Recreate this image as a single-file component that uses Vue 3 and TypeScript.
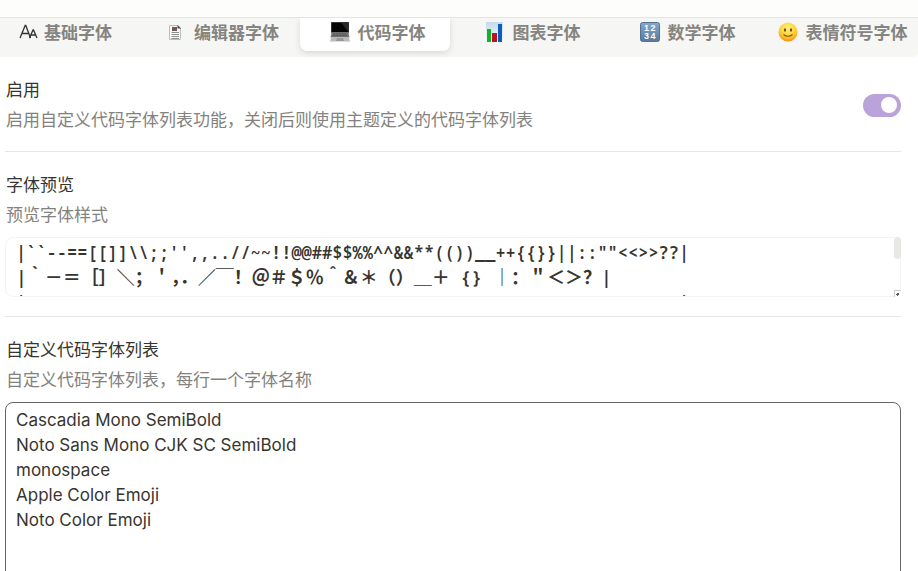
<script setup lang="ts">
import { ref } from 'vue'

interface Tab {
  id: string
  label: string
}

const tabs: Tab[] = [
  { id: 'base', label: '基础字体' },
  { id: 'editor', label: '编辑器字体' },
  { id: 'code', label: '代码字体' },
  { id: 'chart', label: '图表字体' },
  { id: 'math', label: '数学字体' },
  { id: 'emoji', label: '表情符号字体' },
]

const active = ref('code')
const enabled = ref(true)

const halfWidth = '|``--==[[]]\\\\;;\'\',,..//~~!!@@##$$%%^^&&**(())__++{{}}||::""<<>>??|'
const fullWidth = '|｀－＝［］＼；＇，．／￣！＠＃＄％＾＆＊（）＿＋｛｝｜：＂＜＞？|'
const blank = '|' + ' '.repeat(64) + '|'

const fonts = ref(
  [
    'Cascadia Mono SemiBold',
    'Noto Sans Mono CJK SC SemiBold',
    'monospace',
    'Apple Color Emoji',
    'Noto Color Emoji',
  ].join('\n'),
)
</script>

<template>
  <div class="page">
    <header class="topbar"></header>
    <nav class="tabs" role="tablist">
      <button
        v-for="tab in tabs"
        :key="tab.id"
        class="tab"
        :class="{ active: tab.id === active }"
        type="button"
        role="tab"
        :aria-selected="tab.id === active"
        @click="active = tab.id"
      >
        <svg v-if="tab.id === 'base'" class="icon" viewBox="0 0 20 20" aria-hidden="true">
          <g fill="none" stroke="#333" stroke-width="1.3">
            <path d="M2 16 L7.200 3.500 H7.800 L12.500 16 M3.800 11.500 H10.800" />
            <path d="M11.500 16 L15 8 H15.500 L19 16 M13 13 H17.500" />
          </g>
        </svg>
        <svg v-else-if="tab.id === 'editor'" class="icon" viewBox="0 0 20 20" aria-hidden="true">
          <path d="M3.500 3.500 H12 L14.500 6 V17.500 H3.500 Z" fill="#fafafa" stroke="#b8bcbc" />
          <path d="M11.500 3 V6.500 H15 Z" fill="#45494a" />
          <rect x="6" y="5" width="5" height="4" fill="#4d6b59" />
          <path d="M6 5 L11 9 M11 5 L6 9" stroke="#9a4548" />
          <path d="M5.500 10.500 H13 M5.500 12.500 H13 M5.500 14.500 H13 M5.500 16.500 H13" stroke="#8c9090" />
        </svg>
        <svg v-else-if="tab.id === 'code'" class="icon" viewBox="0 0 20 20" aria-hidden="true">
          <rect x="1" y="0" width="18" height="11" fill="#686868" />
          <rect x="1.500" y="0.500" width="17" height="9.500" fill="#050505" />
          <path d="M11 0.500 H18.500 V10 Z" fill="#25282a" />
          <path d="M1.500 10.500 H18.500 L19.500 15.500 H0.500 Z" fill="#777" />
          <path d="M3 12 H17 M2.500 13.700 H17.500" stroke="#4a4a4a" stroke-dasharray="1 0.500" />
          <path d="M1 15.500 H19 L20 20 H0 Z" fill="#b9b9b9" />
          <path d="M7 16 H13 L14 19 H6 Z" fill="#999" />
          <path d="M0 19.500 H20" stroke="#ddd" />
        </svg>
        <svg v-else-if="tab.id === 'chart'" class="icon" viewBox="0 0 20 20" aria-hidden="true">
          <defs>
            <linearGradient id="chart-sky" x1="0" y1="0" x2="0" y2="1">
              <stop offset="0" stop-color="#c6d9ec" />
              <stop offset="1" stop-color="#f8fbfd" />
            </linearGradient>
          </defs>
          <rect x="1" y="0" width="17" height="20" fill="url(#chart-sky)" />
          <rect x="2" y="7" width="4" height="13" fill="#0db529" />
          <rect x="7" y="11" width="5" height="9" fill="#bd1220" />
          <rect x="13" y="2" width="4" height="18" fill="#075dc0" />
        </svg>
        <svg v-else-if="tab.id === 'math'" class="icon" viewBox="0 0 20 20" aria-hidden="true">
          <defs>
            <linearGradient id="math-blue" x1="0" y1="0" x2="0" y2="1">
              <stop offset="0" stop-color="#84a9cc" />
              <stop offset="1" stop-color="#59789b" />
            </linearGradient>
          </defs>
          <rect x="0.500" y="0.500" width="19" height="19" rx="2" fill="url(#math-blue)" stroke="#557391" />
          <g fill="#fff" font-family="Liberation Sans, sans-serif" font-size="9" text-anchor="middle">
            <text x="6.500" y="9">1</text>
            <text x="13" y="9">2</text>
            <text x="6.500" y="17">3</text>
            <text x="13" y="17">4</text>
          </g>
        </svg>
        <svg v-else class="icon" viewBox="0 0 20 20" aria-hidden="true">
          <defs>
            <radialGradient id="face" cx="0.500" cy="0.300" r="0.700">
              <stop offset="0" stop-color="#fff17b" />
              <stop offset="0.600" stop-color="#ffd137" />
              <stop offset="1" stop-color="#f39214" />
            </radialGradient>
          </defs>
          <circle cx="10" cy="10" r="9.500" fill="url(#face)" />
          <ellipse cx="7" cy="8" rx="1.100" ry="1.700" fill="#75471b" />
          <ellipse cx="13" cy="8" rx="1.100" ry="1.700" fill="#75471b" />
          <path d="M5.500 12.500 Q10 16 14.500 12.500" fill="none" stroke="#80501b" stroke-width="1.100" />
        </svg>
        <span>{{ tab.label }}</span>
      </button>
    </nav>

    <main class="settings">
      <section class="item row">
        <label for="enable">
          <span class="title">启用</span>
          <span class="desc">启用自定义代码字体列表功能，关闭后则使用主题定义的代码字体列表</span>
        </label>
        <input id="enable" v-model="enabled" class="switch" type="checkbox" role="switch" />
      </section>

      <section class="item preview-item">
        <span id="preview-title" class="title">字体预览</span>
        <span class="desc">预览字体样式</span>
        <div class="preview-frame">
          <div class="preview" role="region" aria-labelledby="preview-title" tabindex="0">
            <div>{{ halfWidth }}</div>
            <div class="wide">{{ fullWidth }}</div>
            <div>{{ blank }}</div>
          </div>
          <span class="thumb" aria-hidden="true"></span>
          <svg class="grip" viewBox="0 0 7 7" aria-hidden="true">
            <rect width="7" height="7" fill="#fff" />
            <path d="M0 0.500 H7 M0.500 0 V7" stroke="#cfcfd2" />
            <path d="M3 3 H5 V5 H4 V6 H3 V5 H2 V4 H3 Z" fill="#55555a" />
          </svg>
        </div>
      </section>

      <section class="item">
        <label for="fonts">
          <span class="title">自定义代码字体列表</span>
          <span class="desc">自定义代码字体列表，每行一个字体名称</span>
        </label>
        <textarea id="fonts" v-model="fonts" class="list" rows="10" spellcheck="false"></textarea>
      </section>
    </main>
  </div>
</template>

<style>
body {
  background: #fff;
}
</style>

<style scoped>
.page {
  height: 100vh;
  overflow: hidden;
  color: #37352f;
  font-family: 'Inter', 'Noto Sans CJK SC', sans-serif;
  font-size: 17px;
}

.topbar {
  height: 17px;
  background: #fdfdfb;
  border-bottom: 1px solid #e4e4e3;
}

.tabs {
  display: grid;
  grid-template-columns: 140px repeat(5, minmax(0, 1fr));
  gap: 5px;
  padding: 0 3px 6px 0;
  background: #f6f6f4;
  border-radius: 0 0 5px 0;
}

.tab {
  display: flex;
  align-items: center;
  justify-content: center;
  gap: 8px;
  height: 33px;
  padding: 0 0 6px 5px;
  border: 0;
  border-radius: 0 0 7px 7px;
  background: none;
  color: #85847f;
  font: inherit;
  font-weight: 700;
  white-space: nowrap;
}

.tab:first-child {
  justify-content: flex-start;
  padding-left: 18px;
  gap: 6px;
}

.tab.active {
  background: #fff;
  box-shadow: 0 2px 6px rgba(0, 0, 0, 0.12);
  clip-path: inset(0 -8px -8px -8px);
}

.icon {
  flex: none;
  width: 20px;
  height: 20px;
}

.settings {
  padding: 0 17px 0 5px;
}

.item {
  padding: 18px 0 16px;
  border-bottom: 1px solid #e5e5e4;
}

.preview-item {
  padding-bottom: 19px;
}

.row {
  display: flex;
  align-items: center;
  justify-content: space-between;
}

.title,
.desc {
  display: block;
  padding-left: 1px;
  line-height: 30px;
}

.desc {
  color: #83827e;
}

.switch {
  flex: none;
  appearance: none;
  display: flex;
  align-items: center;
  width: 38px;
  height: 23px;
  margin: 0;
  padding: 0 4px;
  box-sizing: border-box;
  border-radius: 12px;
  background: #c8c8c6;
}

.switch::before {
  content: '';
  width: 16px;
  height: 16px;
  border-radius: 50%;
  background: #fff;
}

.switch:checked {
  justify-content: flex-end;
  background: #baa2da;
}

.preview-frame {
  position: relative;
  margin-top: 7px;
}

.preview {
  box-sizing: border-box;
  height: 60px;
  padding: 2px 10px;
  border: 1px solid #f3f3f2;
  border-radius: 8px;
  overflow: hidden;
  outline: none;
  font-family: 'Noto Sans Mono', 'Liberation Mono', 'Noto Sans CJK SC', monospace;
  font-weight: 600;
  line-height: 25px;
  white-space: pre;
}

.wide {
  font-size: 18px;
}

.thumb {
  position: absolute;
  top: 0;
  right: 0;
  width: 7px;
  height: 22px;
  border-radius: 4px;
  background: #e8e8e4;
}

.grip {
  position: absolute;
  right: 0;
  bottom: 0;
  width: 7px;
  height: 7px;
}

.list {
  display: block;
  box-sizing: border-box;
  width: 100%;
  height: 260px;
  margin: 7px 0 0;
  padding: 5px 10px;
  border: 1px solid #666;
  border-radius: 8px;
  background: #fff;
  outline: none;
  resize: none;
  color: inherit;
  font: inherit;
  line-height: 25px;
}
</style>
